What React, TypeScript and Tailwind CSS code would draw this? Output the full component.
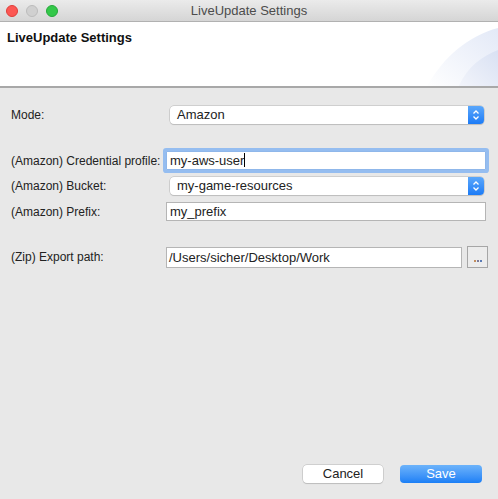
import React from "react";

const font = { fontFamily: '"Liberation Sans", Arial, sans-serif' };

function Stepper() {
  return (
    <div className="w-[16px] h-full rounded-r-[4px] bg-gradient-to-b from-[#5aa7fb] to-[#1a7bf6] flex items-center justify-center">
      <svg width="8" height="12" viewBox="0 0 8 12">
        <path d="M1.5 4.5 L4 2 L6.5 4.5" stroke="white" strokeWidth="1.3" fill="none" />
        <path d="M1.5 7.5 L4 10 L6.5 7.5" stroke="white" strokeWidth="1.3" fill="none" />
      </svg>
    </div>
  );
}

function Select({ value }: { value: string }) {
  return (
    <div className="h-[18px] w-[314px] ml-[6px] flex shrink-0 rounded-[4px] bg-white shadow-[0_0_0_0.5px_#b5b5b5,0_1px_1px_rgba(0,0,0,0.15)]">
      <div className="flex-1 pl-[7px] text-[13px] leading-[18px] text-[#222]">{value}</div>
      <Stepper />
    </div>
  );
}

const label = "w-[153px] shrink-0 whitespace-nowrap text-[12px]";

export default function App() {
  return (
    <div className="w-[498px] h-[499px] bg-[#e8e8e8] flex flex-col overflow-hidden" style={font}>
      {/* title bar */}
      <div className="h-[22px] bg-gradient-to-b from-[#ebebeb] to-[#d5d5d5] border-b border-[#b1b1b1] flex items-center relative">
        <div className="flex gap-[8px] pl-[6px]">
          <div className="w-[12px] h-[12px] rounded-full bg-[#fc5753] border border-[#df3e39]" />
          <div className="w-[12px] h-[12px] rounded-full bg-[#d0d0d0] border border-[#bcbcbc]" />
          <div className="w-[12px] h-[12px] rounded-full bg-[#34c84a] border border-[#25a83a]" />
        </div>
        <div className="absolute inset-0 flex items-center justify-center text-[13px] text-[#4c4c4c]">LiveUpdate Settings</div>
      </div>
      {/* header */}
      <div className="h-[66px] bg-white border-b-2 border-[#a8a8a8] relative overflow-hidden">
        <svg className="absolute right-0 top-0" width="120" height="66" viewBox="0 0 120 66">
          <defs>
            <linearGradient id="g1" x1="0" y1="1" x2="1" y2="0">
              <stop offset="0" stopColor="#ffffff" />
              <stop offset="1" stopColor="#e3e9f7" />
            </linearGradient>
            <linearGradient id="g2" x1="0" y1="1" x2="1" y2="0">
              <stop offset="0" stopColor="#f3f5fb" />
              <stop offset="1" stopColor="#d9e1f3" />
            </linearGradient>
          </defs>
          <path d="M48 66 C 65 35, 90 14, 120 6 L120 66 Z" fill="url(#g1)" />
          <path d="M80 66 C 88 46, 104 34, 120 28 L120 66 Z" fill="url(#g2)" />
        </svg>
        <div className="pl-[7px] pt-[6px] text-[13px] font-bold text-[#111] relative">LiveUpdate Settings</div>
      </div>
      {/* body */}
      <div className="flex-1 flex flex-col pl-[11px] text-[13px] text-[#222]">
        <div className="mt-[18px] flex items-center h-[18px]">
          <div className={label}>Mode:</div>
          <Select value="Amazon" />
        </div>
        <div className="mt-[27px] flex items-center h-[19px]">
          <div className={label}>(Amazon) Credential profile:</div>
          <div className="h-[19px] w-[320px] shrink-0 ml-[2px] bg-white border border-[#8fb7ea] shadow-[0_0_0_3px_#95bdf0] rounded-[1px] pl-[3px] leading-[17px]">
            my-aws-user<span className="inline-block w-[1px] h-[14px] bg-black align-[-2px]" />
          </div>
        </div>
        <div className="mt-[7px] flex items-center h-[18px]">
          <div className={label}>(Amazon) Bucket:</div>
          <Select value="my-game-resources" />
        </div>
        <div className="mt-[7px] flex items-center h-[19px]">
          <div className={label}>(Amazon) Prefix:</div>
          <div className="h-[19px] w-[320px] shrink-0 ml-[2px] bg-white border border-[#b5b5b5] pl-[3px] leading-[17px]">my_prefix</div>
        </div>
        <div className="mt-[25px] flex items-center h-[22px]">
          <div className={label}>(Zip) Export path:</div>
          <div className="h-[21px] w-[296px] shrink-0 ml-[2px] bg-white border border-[#b5b5b5] pl-[2px] leading-[19px]">/Users/sicher/Desktop/Work</div>
          <div className="ml-[5px] h-[22px] w-[21px] shrink-0 border border-[#a6a6a6] bg-[#ececec] flex items-end justify-center pb-[5px] gap-[1px]">
            <div className="w-[2px] h-[2px] bg-[#c28d5d]" />
            <div className="w-[2px] h-[2px] bg-[#7a7a9a]" />
            <div className="w-[2px] h-[2px] bg-[#5b7bb5]" />
          </div>
        </div>
        <div className="flex-1" />
        <div className="flex justify-end gap-[17px] pr-[16px] mb-[16px]">
          <div className="w-[80px] h-[18px] rounded-[4px] bg-white shadow-[0_0_0_0.5px_#b5b5b5,0_1px_1px_rgba(0,0,0,0.15)] text-center leading-[18px] text-[#222]">Cancel</div>
          <div className="w-[82px] h-[18px] rounded-[4px] bg-gradient-to-b from-[#6cb3fa] to-[#1a7ff6] text-center leading-[18px] text-white">Save</div>
        </div>
      </div>
    </div>
  );
}
